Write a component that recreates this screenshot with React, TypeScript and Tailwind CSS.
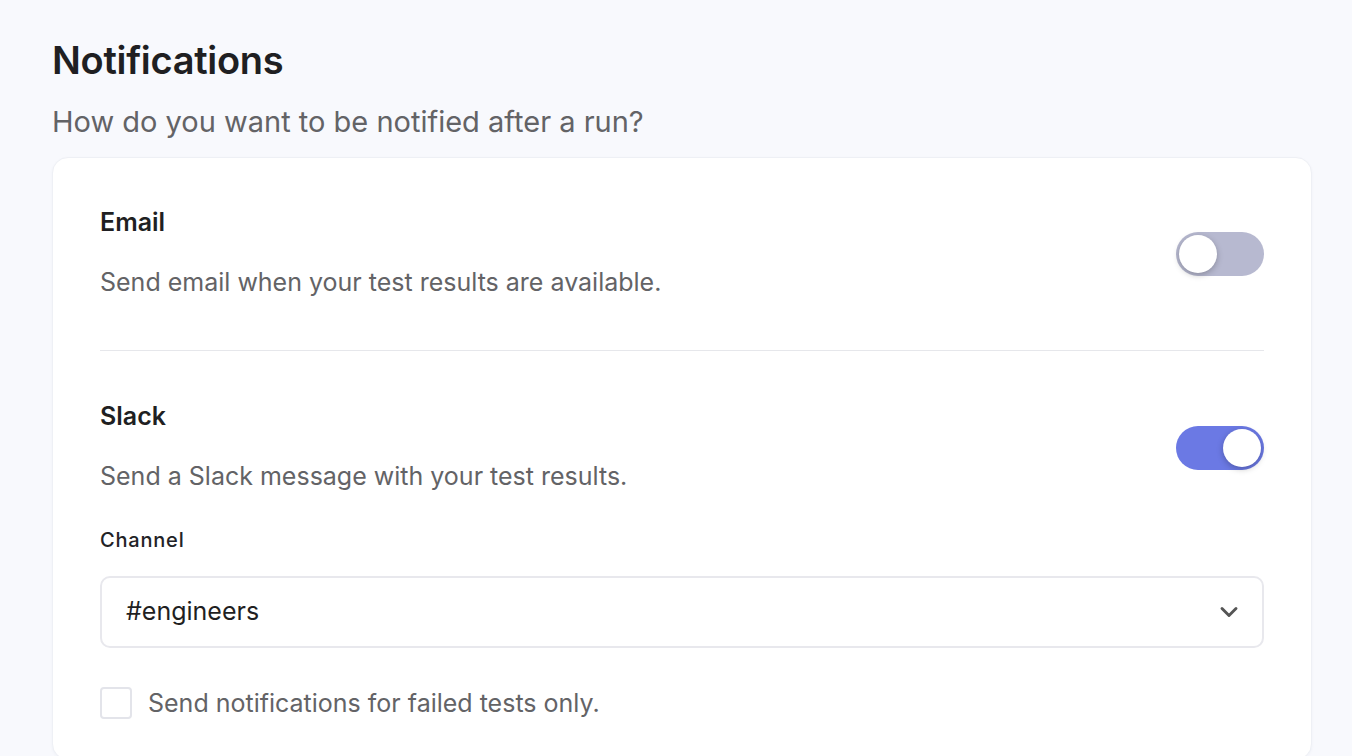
import { useState } from 'react';
import { ChevronDown } from 'lucide-react';

function Toggle({ on, onChange }: { on: boolean; onChange: () => void }) {
  return (
    <button
      onClick={onChange}
      className={`relative mt-[4px] flex h-[44px] w-[88px] shrink-0 items-center rounded-full px-[3px] ${
        on ? 'justify-end bg-[#6b79e4]' : 'justify-start bg-[#b7b9d0]'
      }`}
    >
      <span className="h-[38px] w-[38px] rounded-full bg-white shadow-[0_2px_6px_rgba(0,0,0,0.25)]" />
    </button>
  );
}

export default function App() {
  const [email, setEmail] = useState(false);
  const [slack, setSlack] = useState(true);
  const [failedOnly, setFailedOnly] = useState(false);

  return (
    <div
      className="min-h-screen bg-[#f8f9fd] pl-[52px] pr-[40px] pt-[36px] text-[#1f1f22]"
      style={{ fontFamily: 'Inter, "Noto Sans", sans-serif' }}
    >
      <h1 className="text-[38px] font-semibold leading-[48px] tracking-[-0.3px]">Notifications</h1>
      <p className="mt-[20px] text-[29px] leading-[36px] text-[#636366]">
        How do you want to be notified after a run?
      </p>

      <div className="mt-[17px] rounded-[16px] border border-[#eef0f5] bg-white px-[47px] pt-[48px] pb-[40px] shadow-[0_1px_3px_rgba(30,40,90,0.04)]">
        {/* Email */}
        <div className="flex items-center justify-between pb-[52px]">
          <div>
            <h2 className="text-[25px] font-semibold leading-[32px]">Email</h2>
            <p className="mt-[28px] text-[25px] leading-[32px] text-[#636366]">
              Send email when your test results are available.
            </p>
          </div>
          <Toggle on={email} onChange={() => setEmail(!email)} />
        </div>

        <div className="h-px bg-[#e6e7eb]" />

        {/* Slack */}
        <div className="flex items-center justify-between pt-[49px]">
          <div>
            <h2 className="text-[25px] font-semibold leading-[32px]">Slack</h2>
            <p className="mt-[28px] text-[25px] leading-[32px] text-[#636366]">
              Send a Slack message with your test results.
            </p>
          </div>
          <Toggle on={slack} onChange={() => setSlack(!slack)} />
        </div>

        <label className="mt-[36px] block text-[20px] font-medium leading-[24px] tracking-[0.8px] text-[#222226]">
          Channel
        </label>
        <div className="mt-[24px] flex h-[72px] items-center justify-between rounded-[10px] border-2 border-[#e8e8ed] pl-[24px] pr-[19px]">
          <span className="text-[25px] text-[#1f1f22]">#engineers</span>
          <ChevronDown className="h-[28px] w-[28px] text-[#555]" strokeWidth={2.5} />
        </div>

        <div className="mt-[39px] flex items-center gap-[16px]">
          <button
            onClick={() => setFailedOnly(!failedOnly)}
            className={`h-[32px] w-[32px] rounded-[4px] border-2 ${
              failedOnly ? 'border-[#6b79e4] bg-[#6b79e4]' : 'border-[#e3e4ea] bg-white'
            }`}
          />
          <span className="text-[25px] leading-[32px] text-[#636366]">Send notifications for failed tests only.</span>
        </div>
      </div>
    </div>
  );
}
